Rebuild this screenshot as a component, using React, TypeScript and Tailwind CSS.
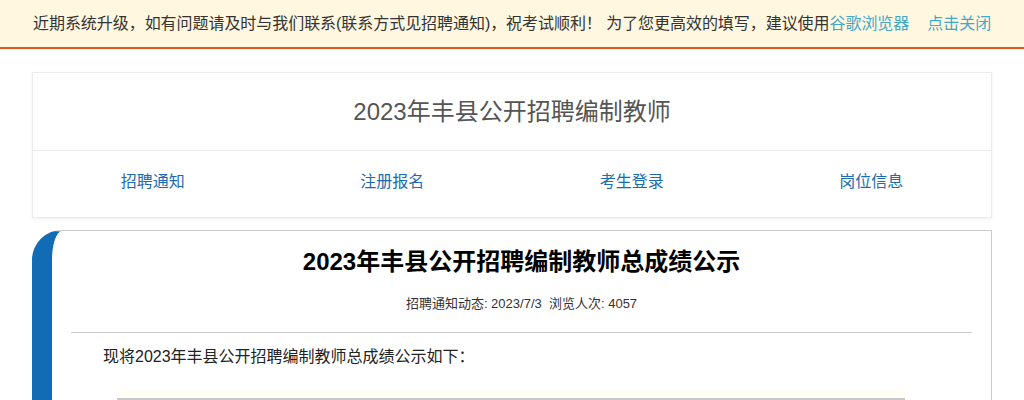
import React from 'react';

const navItems = ['招聘通知', '注册报名', '考生登录', '岗位信息'];

export default function App() {
  return (
    <div className="min-h-screen bg-white text-[#333] font-['Liberation_Sans','Noto_Sans_CJK_SC',sans-serif]">
      {/* Notice banner */}
      <div className="h-[49px] bg-[#fff7df] border-b-2 border-[#e8561c]">
        <div className="w-[960px] mx-auto h-full flex items-center pl-px text-[16px] whitespace-nowrap">
          <span className="tracking-[-0.05px]">
            近期系统升级，如有问题请及时与我们联系(联系方式见招聘通知)，祝考试顺利！ 为了您更高效的填写，建议使用
            <span className="text-[#43a8c8]">谷歌浏览器</span>
          </span>
          <span className="ml-[18px] text-[#43a8c8]">点击关闭</span>
        </div>
      </div>

      {/* Header card */}
      <div className="w-[960px] mx-auto mt-[23px] bg-white border border-[#ececec] shadow-[0_1px_3px_rgba(0,0,0,0.06)]">
        <div className="h-[78px] flex items-center justify-center border-b border-[#ececec]">
          <h1 className="text-[24px] text-[#555]">2023年丰县公开招聘编制教师</h1>
        </div>
        <div className="h-[66px] grid grid-cols-4">
          {navItems.map(item => (
            <a key={item} className="flex items-center justify-center pb-[4px] text-[16px] text-[#1b6bb0]">
              {item}
            </a>
          ))}
        </div>
      </div>

      {/* Article */}
      <div className="w-[960px] mx-auto mt-[12px] h-[200px] bg-white border border-[#cccccc] border-l-[20px] border-l-[#116bb5] rounded-tl-[30px]">
        <h2 className="pt-[14px] text-center text-[24px] font-bold text-black leading-[34px]">
          2023年丰县公开招聘编制教师总成绩公示
        </h2>
        <p className="mt-[15px] text-center text-[13px] leading-[20px] text-[#333]">
          招聘通知动态: 2023/7/3&nbsp; 浏览人次: 4057
        </p>
        <div className="mx-[19px] mt-[18px] border-t border-[#cccccc]" />
        <p className="mt-[12px] ml-[51px] text-[16px] leading-[24px] text-[#222]">
          现将2023年丰县公开招聘编制教师总成绩公示如下：
        </p>
        <div className="ml-[65px] w-[788px] mt-[21px] h-[10px] bg-[#fffdf4] border-b-2 border-[#c8c8c8]" />
      </div>
    </div>
  );
}
